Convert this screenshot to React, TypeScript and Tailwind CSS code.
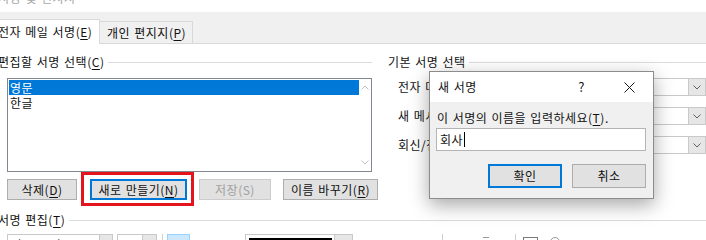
import React from "react";

function Mn({ c }: { c: string }) {
  return (
    <>
      (<span className="underline underline-offset-2">{c}</span>)
    </>
  );
}

function Chevron({ up = false, color = "#606060" }: { up?: boolean; color?: string }) {
  return (
    <svg width="8" height="5" viewBox="0 0 8 5" className="block">
      <path d={up ? "M0.5 4.5 L4 1 L7.5 4.5" : "M0.5 0.5 L4 4 L7.5 0.5"} fill="none" stroke={color} strokeWidth="1" />
    </svg>
  );
}

function WinButton({
  children,
  width,
  focused = false,
  disabled = false,
  height = "h-[21px]",
}: {
  children: React.ReactNode;
  width: string;
  focused?: boolean;
  disabled?: boolean;
  height?: string;
}) {
  return (
    <div
      className={[
        "flex items-center justify-center bg-[#e1e1e1]",
        height,
        width,
        focused ? "border-2 border-[#0078d7]" : disabled ? "border border-[#cccccc] text-[#a0a0a0]" : "border border-[#adadad]",
      ].join(" ")}
    >
      {children}
    </div>
  );
}

function Combo({ width }: { width: string }) {
  return (
    <div className={`flex h-[18px] border border-[#c9c9c9] bg-white ${width}`}>
      <div className="flex-1" />
      <div className="flex w-[17px] items-center justify-center border-l border-[#c9c9c9] bg-[#e6e6e6]">
        <Chevron />
      </div>
    </div>
  );
}

export default function App() {
  return (
    <div className="relative h-[240px] w-[706px] overflow-hidden bg-white text-[12px] leading-[16px] tracking-[0.5px] text-[#111] [word-spacing:1px] font-['Noto_Sans_CJK_KR','Noto_Sans',sans-serif]">
      {/* window title, mostly off the top */}
      <div className="h-[12px] overflow-hidden text-[#a8a8a8]">
        <div className="-ml-[2px] -mt-[10px]">서명 및 편지지</div>
      </div>

      {/* tabs */}
      <div className="flex h-[32px] items-end border-b border-[#d9d9d9] bg-[#f0f0f0]">
        <div className="-mb-px flex h-[25px] w-[100px] items-center border-r border-t border-[#d9d9d9] bg-white">
          <span className="-ml-[2px]">
            전자 메일 서명<Mn c="E" />
          </span>
        </div>
        <div className="flex h-[22px] w-[93px] items-center border-r border-t border-[#d9d9d9] bg-[#f0f0f0] pl-[7px]">
          개인 편지지<Mn c="P" />
        </div>
      </div>

      {/* upper groups */}
      <div className="flex">
        {/* left: signature list */}
        <div className="w-[384px] pt-[10px]">
          <div className="flex h-[16px] w-[372px] items-center">
            <span className="-ml-[2px]">
              편집할 서명 선택<Mn c="C" />
            </span>
            <div className="ml-[4px] h-px flex-1 bg-[#dcdcdc]" />
          </div>

          <div className="ml-[7px] mt-[8px] flex h-[94px] w-[365px] border border-[#828790]">
            <div className="flex-1 pl-[1px] pt-[1px]">
              <div className="h-[15px] bg-[#0078d7] pl-[1px] leading-[15px] text-white">영문</div>
              <div className="h-[15px] pl-[1px] leading-[15px]">한글</div>
            </div>
            <div className="flex w-[12px] flex-col items-center justify-between py-[6px]">
              <Chevron up color="#c2c2c2" />
              <Chevron color="#c2c2c2" />
            </div>
          </div>

          <div className="ml-[7px] mt-[7px] flex gap-[12px]">
            <WinButton width="w-[70px]">
              삭제<Mn c="D" />
            </WinButton>
            <div className="relative ml-px">
              <WinButton width="w-[97px]" focused>
                새로 만들기<Mn c="N" />
              </WinButton>
              <div className="absolute -bottom-[6px] -left-[9px] -right-[7px] -top-[7px] border-[3px] border-[#e3141b]" />
            </div>
            <WinButton width="w-[72px]" disabled>
              저장(S)
            </WinButton>
            <WinButton width="w-[95px]">
              이름 바꾸기<Mn c="R" />
            </WinButton>
          </div>
        </div>

        {/* right: default signature */}
        <div className="flex-1 pt-[10px]">
          <div className="flex h-[16px] items-center pl-[4px]">
            <span>기본 서명 선택</span>
            <div className="ml-[3px] h-px flex-1 bg-[#dcdcdc]" />
          </div>
          <div className="mt-[8px] flex flex-col gap-[11px]">
            {[
              ["전자 메일 계정", "A"],
              ["새 메시지", "M"],
              ["회신/전달", "F"],
            ].map(([label, key]) => (
              <div key={key} className="flex h-[18px] items-center justify-between pl-[14px]">
                <span>
                  {label}
                  <Mn c={key} />:
                </span>
                <Combo width="w-[209px]" />
              </div>
            ))}
          </div>
        </div>
      </div>

      {/* signature editor */}
      <div className="mt-[12px] flex h-[16px] items-center">
        <span className="-ml-[2px]">
          서명 편집<Mn c="T" />
        </span>
        <div className="ml-[4px] h-px flex-1 bg-[#dcdcdc]" />
      </div>

      <div className="ml-[7px] mt-[6px] flex h-[22px] items-start">
        <div className="flex h-[22px] w-[106px] border border-[#c9c9c9]">
          <div className="flex-1 pl-[3px] leading-[20px]">맑은 고딕</div>
          <div className="w-[13px] border-l border-[#c9c9c9] bg-[#e6e6e6]" />
        </div>
        <div className="ml-[4px] flex h-[22px] w-[40px] border border-[#c9c9c9]">
          <div className="flex-1" />
          <div className="w-[14px] border-l border-[#c9c9c9] bg-[#e6e6e6]" />
        </div>
        <div className="ml-[5px] h-[22px] w-px bg-[#cfcfcf]" />
        <div className="ml-[4px] h-[22px] w-[23px] border border-[#99d1ff] bg-[#cce8ff]" />
        <div className="ml-[55px] flex h-[22px] w-[108px] border border-[#c9c9c9] p-[3px] pr-0">
          <div className="flex-1 bg-black" />
          <div className="-my-[3px] ml-[2px] w-[18px] border-l border-[#c9c9c9] bg-[#e6e6e6]" />
        </div>
        <div className="ml-[89px] h-[22px] w-px bg-[#cfcfcf]" />
        <div className="ml-[40px] mt-[3px] h-[6px] w-[6px] border-t border-[#9a9a9a]" />
        <div className="ml-[26px] h-[22px] w-px bg-[#cfcfcf]" />
        <div className="ml-[7px] mt-[3px] h-[12px] w-[15px] border border-[#7a7a7a]" />
        <div className="ml-[12px] mt-[3px] h-[10px] w-[10px] rounded-full border border-[#9a9a9a]" />
      </div>

      {/* "새 서명" dialog */}
      <div className="absolute left-[429px] top-[71px] flex h-[128px] w-[225px] flex-col border border-[#8c8c8c] bg-[#f0f0f0] shadow-[0_6px_18px_rgba(0,0,0,0.35)]">
        <div className="flex h-[30px] items-center bg-white pl-[8px]">
          <span className="flex-1">새 서명</span>
          <span className="mr-[39px] text-[13px]">?</span>
          <svg width="11" height="11" viewBox="0 0 11 11" className="mr-[18px]">
            <path d="M0.5 0.5 L10.5 10.5 M10.5 0.5 L0.5 10.5" stroke="#1a1a1a" strokeWidth="1" />
          </svg>
        </div>
        <div className="pl-[7px] pt-[8px]">
          이 서명의 이름을 입력하세요<Mn c="T" />.
        </div>
        <div className="ml-[6px] mt-[2px] flex h-[23px] w-[210px] items-center border border-[#b4b4b4] bg-white pl-[3px]">
          회사
          <span className="ml-px h-[15px] w-px bg-black" />
        </div>
        <div className="mt-[13px] flex justify-end gap-[10px] pr-[7px]">
          <WinButton width="w-[74px]" height="h-[24px]" focused>
            확인
          </WinButton>
          <WinButton width="w-[74px]" height="h-[24px]">
            취소
          </WinButton>
        </div>
      </div>
    </div>
  );
}
